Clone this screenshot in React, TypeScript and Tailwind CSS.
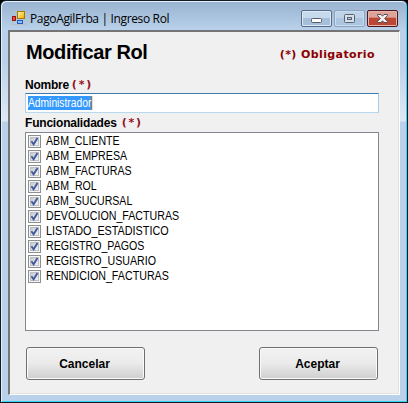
import type { ReactNode } from "react";

const features = [
  { name: "ABM_CLIENTE", scale: "scale-x-[0.883]" },
  { name: "ABM_EMPRESA", scale: "scale-x-[0.888]" },
  { name: "ABM_FACTURAS", scale: "scale-x-[0.885]" },
  { name: "ABM_ROL", scale: "scale-x-[0.885]" },
  { name: "ABM_SUCURSAL", scale: "scale-x-[0.88]" },
  { name: "DEVOLUCION_FACTURAS", scale: "scale-x-[0.887]" },
  { name: "LISTADO_ESTADISTICO", scale: "scale-x-[0.9]" },
  { name: "REGISTRO_PAGOS", scale: "scale-x-[0.885]" },
  { name: "REGISTRO_USUARIO", scale: "scale-x-[0.887]" },
  { name: "RENDICION_FACTURAS", scale: "scale-x-[0.89]" },
];

function AppIcon() {
  return (
    <svg width="14" height="14" viewBox="0 0 14 14" shapeRendering="crispEdges">
      <defs>
        <linearGradient id="gold" x1="0" y1="0" x2="1" y2="1">
          <stop offset="0" stopColor="#fff3a6" />
          <stop offset="1" stopColor="#f0b000" />
        </linearGradient>
      </defs>
      <path d="M0.5 .5h13v13h-13z" fill="none" stroke="#b9bfc6" />
      <rect x="5" y="0" width="8" height="8" fill="#a87900" />
      <rect x="6" y="1" width="6" height="6" fill="url(#gold)" />
      <rect x="0" y="5" width="4" height="5" fill="#9c1510" />
      <rect x="1" y="6" width="2" height="3" fill="#ee4a32" />
      <rect x="5" y="9" width="6" height="4" fill="#245bb8" />
      <rect x="6" y="10" width="4" height="2" fill="#8bbcff" />
    </svg>
  );
}

function CheckBox() {
  return (
    <svg width="13" height="13" viewBox="0 0 13 13" className="shrink-0">
      <defs>
        <linearGradient id="well" x1="0" y1="0" x2="1" y2="1">
          <stop offset="0" stopColor="#c3c8cf" />
          <stop offset="1" stopColor="#f6f6f6" />
        </linearGradient>
      </defs>
      <rect x=".5" y=".5" width="12" height="12" fill="#f4f4f4" stroke="#8e8f8f" />
      <rect x="2.5" y="2.5" width="8" height="8" fill="url(#well)" stroke="#bcc0c6" />
      <path d="M3.4 6.2 5.6 9.3 9.5 2.9" fill="none" stroke="#42599c" strokeWidth="1.9" />
    </svg>
  );
}

function Required() {
  return <span className="font-['DejaVu_Sans',sans-serif] text-[11px] font-bold tracking-[1.8px] text-[#96101c]">(*)</span>;
}

function Button({ children }: { children: ReactNode }) {
  return (
    <button className="h-[33px] w-[119px] rounded-[3px] border border-[#707070] bg-linear-to-b from-[#f2f2f2] from-0% via-[#ebebeb] via-48% to-[#cfcfcf] pr-[2px] text-[12px] font-bold shadow-[inset_0_0_0_1px_#fafafa]">
      {children}
    </button>
  );
}

export default function App() {
  return (
    <div className="h-[403px] w-[408px] bg-black font-['Liberation_Sans',Arial,sans-serif] text-black">
      <div className="flex h-full flex-col rounded-t-[6px] border border-[#111b24] bg-[linear-gradient(180deg,#b9d1ea_0px,#b9d1ea_60px,#dde8f5_118px,#dde8f5_120px,#b9d1ea_121px)] shadow-[inset_1px_1px_0_#e4f2fc,inset_-1px_-1px_0_#2fd4f5]">
        <header className="mx-px mt-px flex h-[28px] shrink-0 items-start rounded-t-[5px] bg-linear-to-b from-[#99b4d1] to-[#b9d1ea] pl-[10px]">
          <div className="pt-[9px]"><AppIcon /></div>
          <h1 className="ml-[4px] mt-[9px] whitespace-nowrap font-['Open_Sans',sans-serif] text-[12px] leading-[16px] tracking-[-0.35px]">PagoAgilFrba | Ingreso Rol</h1>
          <div className="ml-auto mr-[8px] mt-[8px] flex gap-[2px]">
            <span className="flex h-[17px] w-[31px] rounded-[2px] border border-[#566b85] bg-linear-to-b from-[#c7d9ec] from-45% to-[#a5bfda] to-50% shadow-[inset_0_0_0_1px_#dce9f6]">
              <svg width="29" height="15"><rect x="9.5" y="7.5" width="10" height="4" rx="1" fill="#fff" stroke="#555c66" /></svg>
            </span>
            <span className="flex h-[17px] w-[31px] rounded-[2px] border border-[#8ca4bd] bg-linear-to-b from-[#bed3e8] from-45% to-[#acc6e0] to-50% shadow-[inset_0_0_0_1px_#cadcf0]">
              <svg width="29" height="15"><rect x="9.5" y="3.5" width="10" height="8" rx="1" fill="#d8dee8" stroke="#596273" /><rect x="12.5" y="6.5" width="4" height="2" fill="#b5cae0" stroke="#596273" /></svg>
            </span>
            <span className="flex h-[17px] w-[31px] rounded-[2px] border border-[#4d171d] bg-linear-to-b from-[#dfa298] from-40% to-[#bd4735] to-50% shadow-[inset_0_0_0_1px_#e8b5aa]">
              <svg width="29" height="15"><path d="M9.5 3.5h3.5l1.5 1.7L16 3.5h3.5v1L16.700 7.500l2.800 3v1H16l-1.500-1.700L13 11.500H9.500v-1l2.800-3L9.500 4.500z" fill="#f2f2f2" stroke="#544b56" /></svg>
            </span>
          </div>
        </header>
        <main className="mx-[7px] mb-[7px] flex grow flex-col border-b border-l-2 border-r border-t-2 border-b-white border-l-[#777] border-r-white border-t-[#747474] bg-[#f0f0f0] pl-[15px] pr-[20px] shadow-[inset_-1px_-1px_0_#e3e3e3]">
          <div className="flex h-[45px] shrink-0 items-start justify-between pl-px">
            <h2 className="pt-[8px] text-[20px] font-bold leading-[24px] tracking-[-0.4px]">Modificar Rol</h2>
            <p className="mr-[4px] pt-[15px] font-['DejaVu_Sans',sans-serif] text-[11px] font-bold leading-[16px] tracking-[0.4px] text-[#8b0000]">(*) Obligatorio</p>
          </div>
          <div className="flex h-[16px] shrink-0 items-center gap-[3px] text-[12px] font-bold leading-[16px] tracking-[-0.25px]">Nombre <Required /></div>
          <div className="flex h-[20px] shrink-0 items-center border border-b-[#b7d9ed] border-l-[#b5cfe7] border-r-[#a4c9e3] border-t-[#3d7bad] bg-white pl-[2px]">
            <span className="flex h-[14px] origin-left scale-x-[0.855] items-center border-r border-[#cc6600] bg-[#3399ff] text-[12px] text-white">Administrador</span>
          </div>
          <div className="flex h-[19px] shrink-0 items-center gap-[5px] text-[12px] font-bold leading-[16px] tracking-[-0.2px]">Funcionalidades <Required /></div>
          <ul className="h-[199px] shrink-0 border border-[#828790] bg-white pl-[2px] pt-px">
            {features.map((f) => (
              <li key={f.name} className="flex h-[15px] items-center gap-[5px] text-[12px] leading-[15px]">
                <CheckBox />
                <span className={`origin-left ${f.scale}`}>{f.name}</span>
              </li>
            ))}
          </ul>
          <div className="mt-[16px] flex justify-between px-px">
            <Button>Cancelar</Button>
            <Button>Aceptar</Button>
          </div>
        </main>
      </div>
    </div>
  );
}
